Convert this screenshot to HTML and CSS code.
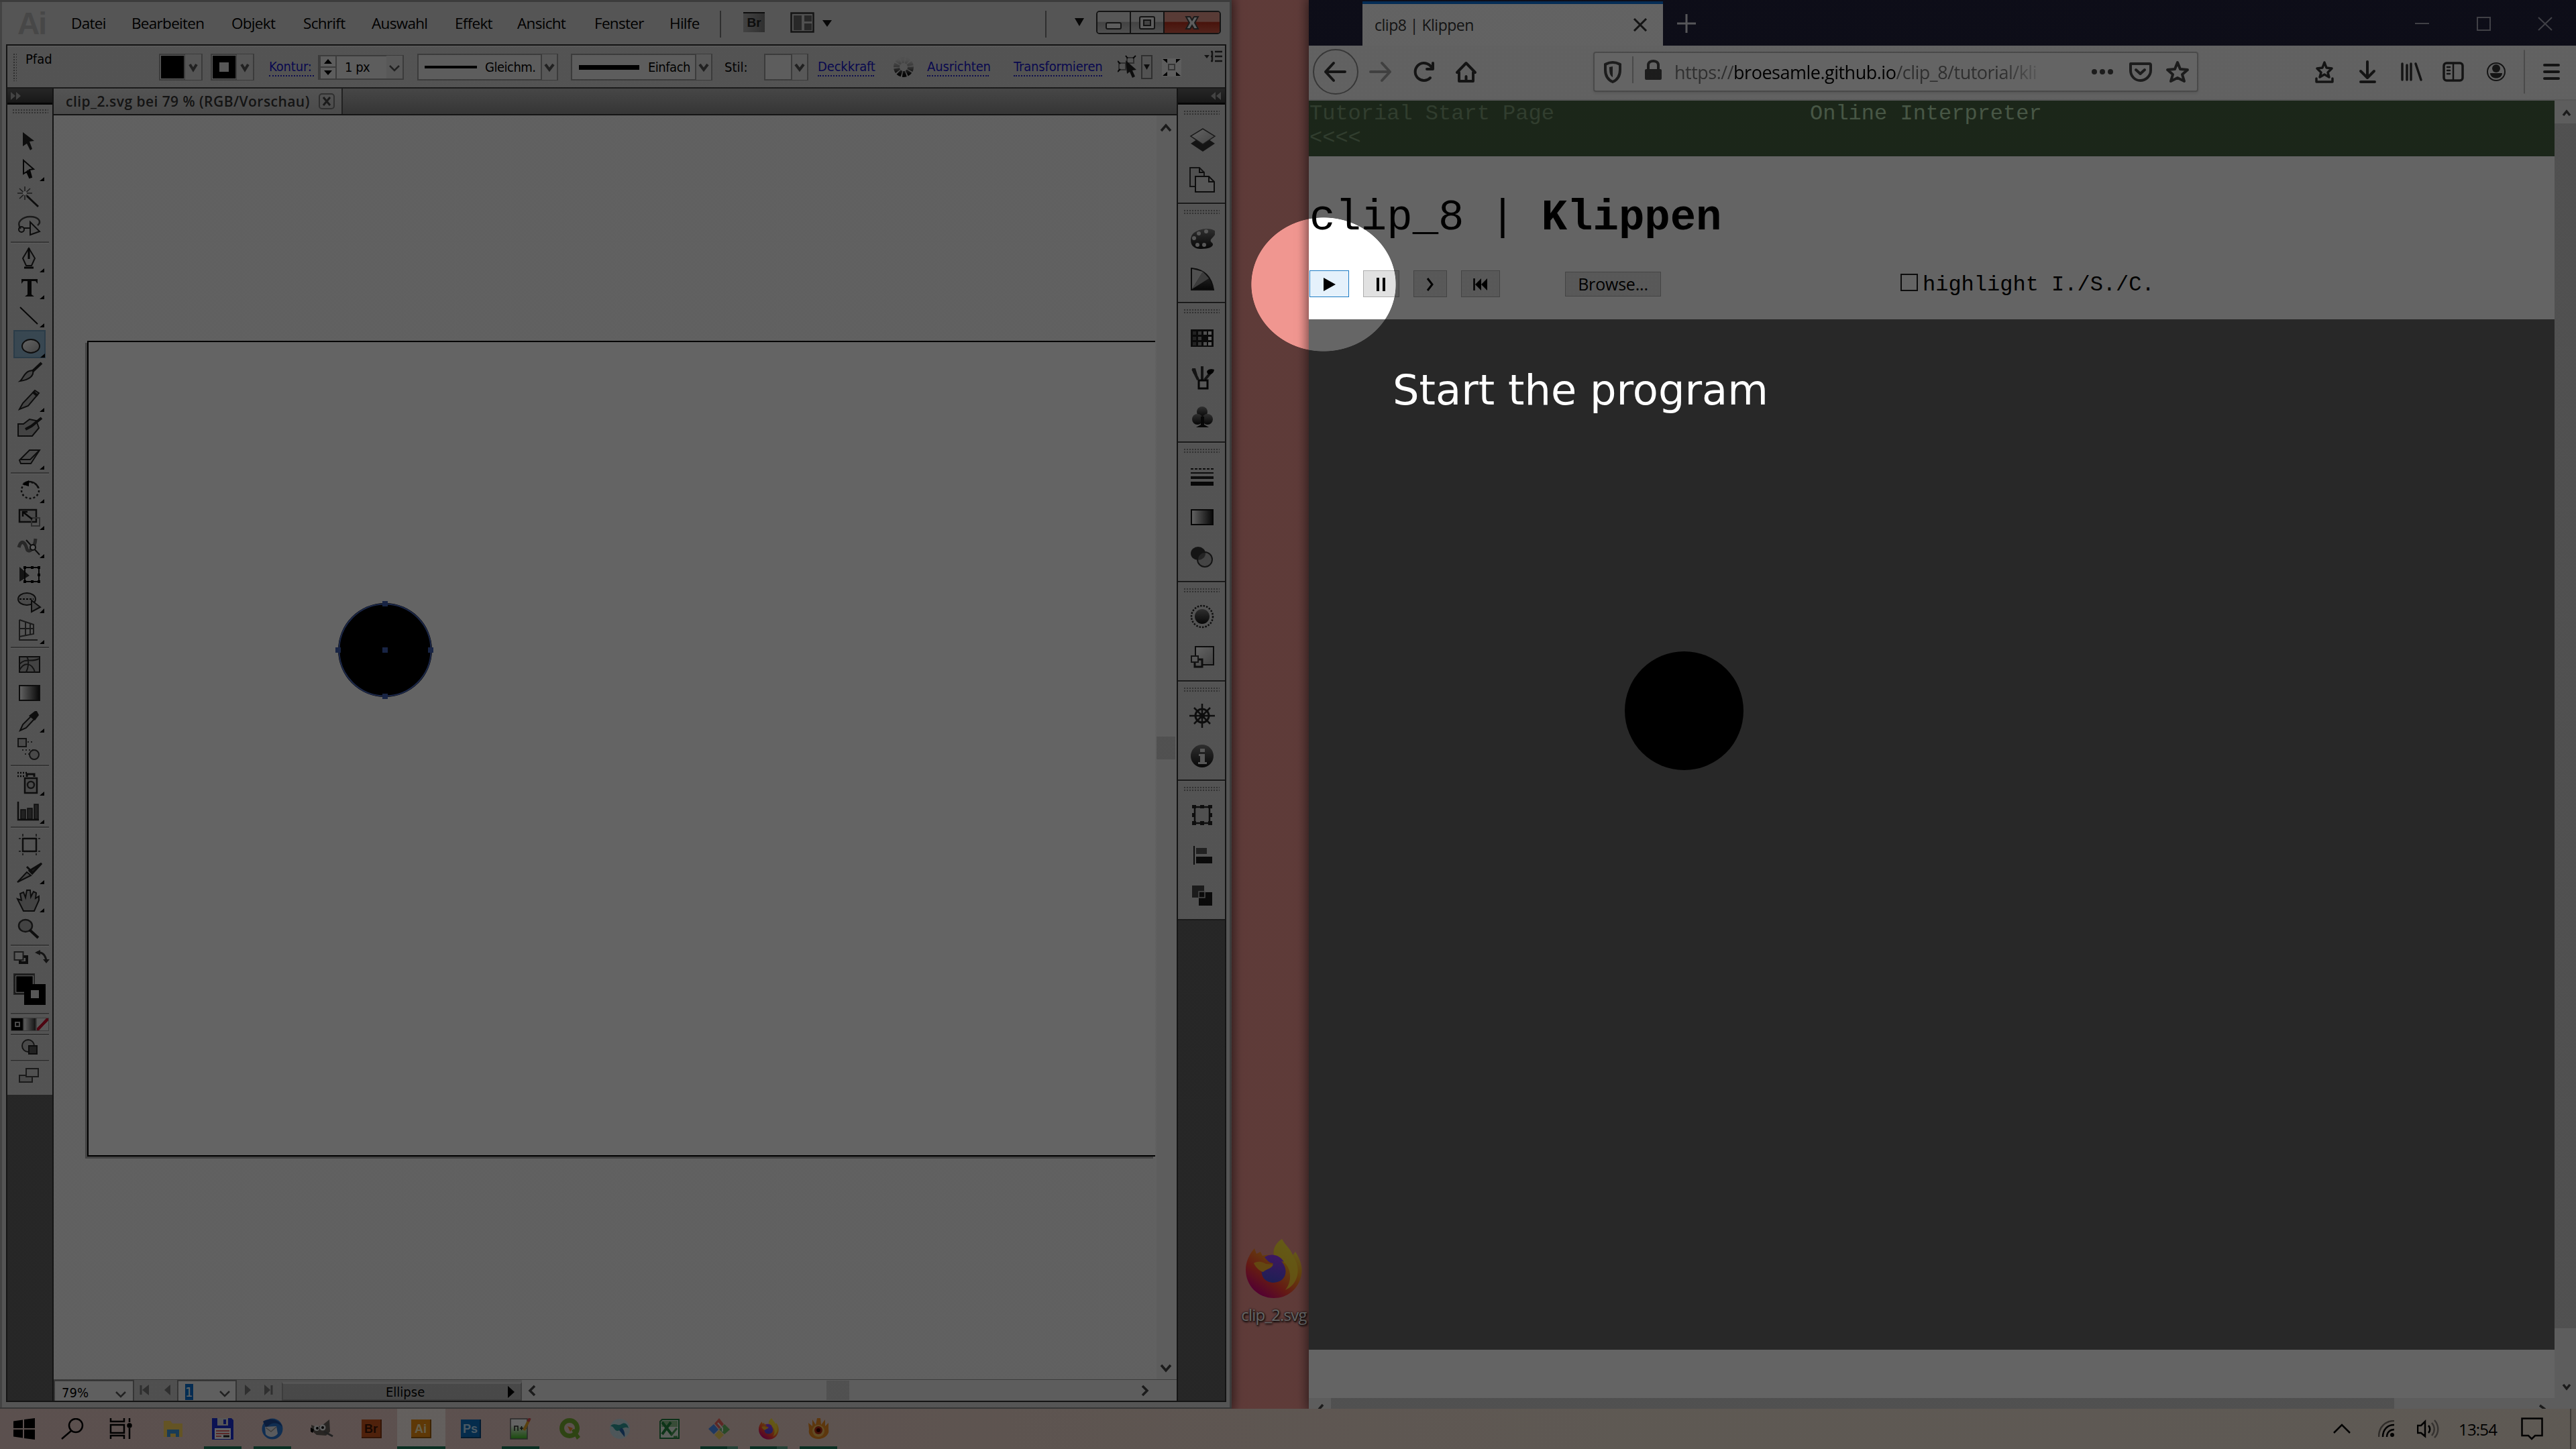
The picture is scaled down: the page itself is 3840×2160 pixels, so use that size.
FILE: index.html
```html
<!DOCTYPE html>
<html lang="de">
<head>
<meta charset="utf-8">
<title>clip8 | Klippen</title>
<link rel="stylesheet" href="styles.css">
</head>
<body>
<svg class="defs" width="0" height="0">
  <defs>
    <linearGradient id="gl" x1="0" y1="0" x2="1" y2="1"><stop offset="0" stop-color="#fff"/><stop offset="1" stop-color="#aaa"/></linearGradient>
    <linearGradient id="gh"><stop offset="0" stop-color="#fff"/><stop offset="1" stop-color="#111"/></linearGradient>
    <linearGradient id="gd" x1="0" y1="0" x2="0" y2="1"><stop offset="0" stop-color="#777"/><stop offset="1" stop-color="#111"/></linearGradient>
    <linearGradient id="gw" x1="0" y1="0" x2="0" y2="1"><stop offset="0" stop-color="#ccc"/><stop offset=".5" stop-color="#888"/><stop offset="1" stop-color="#111"/></linearGradient>
    <linearGradient id="ffa" x1=".85" y1=".1" x2=".25" y2=".95"><stop offset="0" stop-color="#fff04a"/><stop offset=".35" stop-color="#ffa51f"/><stop offset=".7" stop-color="#ff4133"/><stop offset="1" stop-color="#d3007e"/></linearGradient>
    <linearGradient id="ffb" x1=".6" y1="0" x2=".4" y2="1"><stop offset="0" stop-color="#a03cf5"/><stop offset="1" stop-color="#4a4fd8"/></linearGradient>
    <linearGradient id="npp" x1="0" y1="0" x2="0" y2="1"><stop offset=".3" stop-color="#fff"/><stop offset="1" stop-color="#3fc020"/></linearGradient>
    <symbol id="firefox" viewBox="0 0 84 88">
      <path d="M54 0C59 10 66 13 70 24L74 19C82 31 85 43 83 53C79 75 62 88 42 88C18 88 0 69 0 46C0 34 5 23 13 14L16 22L22 19L25 25C32 23 38 24 42 25C40 14 45 6 54 0Z" fill="url(#ffa)"/>
      <path d="M54 0C59 10 66 13 71 26C84 46 77 68 59 76C72 60 66 37 52 32L42 25C40 14 45 6 54 0Z" fill="#ffe436" opacity=".8"/>
      <path d="M28 27C38 20 51 24 57 34L53 33C65 46 60 64 42 65C28 65 22 55 24 44L38 41L41 36C35 36 31 31 28 27Z" fill="url(#ffb)"/>
      <path d="M12 36C18 32 26 34 30 37L41 38C38 45 31 44 26 49C23 49 15 43 12 36Z" fill="#ffb52b"/>
    </symbol>
  </defs>
</svg>

<main class="desktop">

  <div class="shortcut">
    <svg width="84" height="88"><use href="#firefox"/></svg>
    <span>clip_2.svg</span>
  </div>

  <section class="ai">
    <header class="ai-title">
      <span class="ai-logo">Ai</span>
      <nav class="ai-menu"><span>Datei</span><span>Bearbeiten</span><span>Objekt</span><span>Schrift</span><span>Auswahl</span><span>Effekt</span><span>Ansicht</span><span>Fenster</span><span>Hilfe</span></nav>
      <i class="vline"></i>
      <span class="br-chip">Br</span>
      <svg class="arrange" width="64" height="32"><rect x="1.5" y="1.500" width="33" height="28" fill="#ccc" stroke="#333" stroke-width="2.500"/><path d="M5 5H17V27H5zM21 5H32V14H21zM21 17H32V27H21z" fill="#666"/><path d="M48 12H62L55 22z" fill="#111"/></svg>
      <i class="vline push"></i>
      <svg class="wsdrop" width="14" height="12"><path d="M0 0H14L7 12z" fill="#111"/></svg>
      <div class="winbtns">
        <span class="min"><svg width="26" height="14"><rect x="2" y="3" width="22" height="9" rx="2" fill="#eee" stroke="#333" stroke-width="2"/></svg></span>
        <span class="max"><svg width="26" height="22"><rect x="2" y="2" width="22" height="18" rx="2" fill="#eee" stroke="#333" stroke-width="2"/><rect x="8" y="7" width="10" height="8" fill="#aaa" stroke="#333" stroke-width="2"/></svg></span>
        <span class="close"><svg width="26" height="22"><path d="M4 2H10L13 7L16 2H22L17 11L22 20H16L13 15L10 20H4L9 11z" fill="#eee" stroke="#444" stroke-width="2"/></svg></span>
      </div>
    </header>

    <div class="ai-frame">
      <div class="ctrl">
        <i class="grip-v"></i>
        <span class="kind">Pfad</span>
        <span class="swatch"><b class="fill"></b><svg width="24" height="38"><path d="M7 15L12 23L17 15" class="chev"/></svg></span>
        <span class="swatch sw2"><b class="ring"></b><svg width="24" height="38"><path d="M7 15L12 23L17 15" class="chev"/></svg></span>
        <a class="lnk l-kontur">Kontur:</a>
        <span class="field num">
          <svg width="26" height="34"><path d="M1 0V34M25 0V34M1 17H25" stroke="#999" stroke-width="2"/><path d="M7 12L13 5L19 12zM7 22L13 29L19 22z" fill="#000"/></svg>
          <em>1 px</em>
          <svg width="24" height="34"><path d="M5 15L12 22L19 15" class="chev thin"/></svg>
        </span>
        <span class="field line1"><i></i><em>Gleichm.</em><svg width="24" height="38"><path d="M1 0V38" stroke="#999" stroke-width="2"/><path d="M7 15L13 23L19 15" class="chev"/></svg></span>
        <span class="field line2"><i></i><em>Einfach</em><svg width="24" height="38"><path d="M1 0V38" stroke="#999" stroke-width="2"/><path d="M7 15L13 23L19 15" class="chev"/></svg></span>
        <span class="lbl">Stil:</span>
        <span class="field style"><svg width="24" height="38"><path d="M1 0V38" stroke="#999" stroke-width="2"/><path d="M7 15L13 23L19 15" class="chev"/></svg></span>
        <a class="lnk l-deck">Deckkraft</a>
        <svg class="wheel" width="32" height="32"><circle cx="16" cy="16" r="10.500" fill="none" stroke="url(#gw)" stroke-width="9" stroke-dasharray="5 1.500"/></svg>
        <a class="lnk l-aus">Ausrichten</a>
        <a class="lnk l-trans">Transformieren</a>
        <svg class="isol" width="96" height="36"><path d="M2 12H12V22H2zM14 4H24V12H14z" fill="none" stroke="#777" stroke-width="2"/><path d="M0 9L4 13M0 25L4 21M12 1L15 5M27 1L23 5" stroke="#111" stroke-width="2"/><path d="M12 8L28 22L22 23L26 32L22 34L18 25L14 28z" fill="#222"/><rect x="36" y="1" width="15" height="34" fill="#d0d0d0" stroke="#777" stroke-width="2"/><path d="M39 14H48L43.500 22z" fill="#222"/><rect x="66" y="5" width="29" height="27" fill="#eee"/><path d="M76 14H85V22H76z" fill="none" stroke="#888" stroke-width="2"/><path d="M67 6H74V12zM94 6H87V12zM67 31H74V25zM94 31H87V25z" fill="#000"/></svg>
        <svg class="pmenu" width="27" height="18"><path d="M0 7H8L4 12z" fill="#333"/><path d="M10 2H13M16 2H27M10 9H13M16 9H27M10 16H13M16 16H27M12 2V16" stroke="#333" stroke-width="2.500"/></svg>
      </div>

      <div class="ai-body">
        <aside class="tools">
          <div class="dockhead left"><svg width="16" height="12"><path d="M0 0L7 6L0 12zM8 0L15 6L8 12z" fill="#aaa"/></svg></div>
          <div class="toolpanel">
            <i class="grip-h"></i>
            <div class="tgroup">
              <svg class="tool"><path d="M14 7L31 20L24 21L28 32L25 34L20 24L14 28z" fill="#222"/></svg>
              <svg class="tool more"><path d="M15 7L30 20L24 21L27 32L24 33L20 24L15 27z" fill="#ccc" stroke="#111" stroke-width="2"/><path d="M20 22L24 21L27 32L24 33z" fill="#111"/><path d="M46 32V38H39z"/></svg>
              <svg class="tool"><path d="M6 14H28M17 4V24M9 7L25 22M25 7L9 22" stroke="#444" stroke-width="1.500"/><circle cx="17" cy="14" r="3" fill="#eee"/><path d="M20 18L37 34" stroke="#222" stroke-width="3"/></svg>
              <svg class="tool"><path d="M11 25C3 15 14 7 25 7C37 7 43 14 36 20" fill="none" stroke="#444" stroke-width="2.500"/><circle cx="12" cy="26" r="4" fill="none" stroke="#222" stroke-width="2"/><path d="M16 24H26M25 15L39 29L25 34z" fill="#ccc" stroke="#222" stroke-width="2"/></svg>
            </div>
            <hr>
            <div class="tgroup">
              <svg class="tool"><path d="M23 4L32 19L27 30H19L14 19z" fill="#ccc" stroke="#222" stroke-width="2"/><path d="M23 4V20M16 33H30" stroke="#111" stroke-width="3"/><path d="M46 34V40H39z"/></svg>
              <svg class="tool"><path d="M12 8H36V15L33 11H27V31L31 34H17L21 31V11H15L12 15z" fill="#111"/><path d="M46 32V38H39z"/></svg>
              <svg class="tool"><path d="M10 8L36 33" stroke="#111" stroke-width="2"/><path d="M46 32V38H39z"/></svg>
              <svg class="tool active"><ellipse cx="26" cy="24" rx="13" ry="10" fill="url(#gl)" stroke="#222" stroke-width="2"/><path d="M47 35V41H40z"/></svg>
              <svg class="tool"><path d="M42 7L28 20" stroke="#222" stroke-width="4"/><path d="M29 18C31 26 24 32 10 34C15 30 16 21 24 19z" fill="#aaa" stroke="#222" stroke-width="2"/></svg>
              <svg class="tool"><path d="M9 34L14 25L32 6L38 10L22 29z" fill="#aaa" stroke="#222" stroke-width="2"/><path d="M29 8L36 14" stroke="#222" stroke-width="4"/><path d="M46 32V38H39z"/></svg>
              <svg class="tool"><path d="M7 14H15L24 7L34 9L38 20L28 32H7z" fill="#aaa" stroke="#222" stroke-width="2"/><path d="M42 5L27 17L18 22" stroke="#222" stroke-width="4" fill="none"/></svg>
              <svg class="tool"><path d="M9 26L24 11H39L26 31H11z" fill="#bbb" stroke="#222" stroke-width="2"/><path d="M10 25H25L38 12" fill="none" stroke="#222" stroke-width="2"/><path d="M46 34V40H39z"/></svg>
            </div>
            <hr>
            <div class="tgroup">
              <svg class="tool"><ellipse cx="25" cy="21" rx="13" ry="12" fill="none" stroke="#222" stroke-width="2.500" stroke-dasharray="3 3"/><path d="M15 11C22 6 33 7 37 17" fill="none" stroke="#222" stroke-width="2.500"/><path d="M13 12L23 6V15z"/><path d="M46 34V40H39z"/></svg>
              <svg class="tool"><path d="M9 8H34V26H9z" fill="#bbb" stroke="#222" stroke-width="2.500"/><path d="M27 20H39V32H27z" fill="none" stroke="#777" stroke-width="2"/><path d="M14 18V11H21M14 11L28 22" fill="none" stroke="#111" stroke-width="2.500"/><path d="M46 32V38H39z"/></svg>
              <svg class="tool"><path d="M8 22C12 8 18 16 20 24S32 24 33 9" fill="none" stroke="#666" stroke-width="5"/><path d="M19 11L39 33" stroke="#222" stroke-width="2"/><circle cx="29" cy="22" r="4" fill="#eee" stroke="#222" stroke-width="2"/><path d="M46 32V38H39z"/></svg>
              <svg class="tool"><path d="M9 9L24 22L9 31z" fill="#333"/><path d="M17 10H38V31H17z" fill="none" stroke="#111" stroke-width="2"/><path d="M15 8h4v4h-4zM26 8h4v4h-4zM36 8h4v4h-4zM36 19h4v4h-4zM36 29h4v4h-4zM26 29h4v4h-4zM15 29h4v4h-4z"/></svg>
              <svg class="tool"><ellipse cx="20" cy="15" rx="13" ry="9" fill="#bbb" stroke="#222" stroke-width="2"/><path d="M9 15H30" stroke="#111" stroke-width="2" stroke-dasharray="3 2"/><path d="M27 17L40 27L27 34z" fill="#aaa" stroke="#222" stroke-width="2"/><path d="M46 29V36H39z"/></svg>
              <svg class="tool"><path d="M9 4V34H36M9 4L30 11V25L9 29M9 17H30M18 7V27M25 9V26" fill="none" stroke="#444" stroke-width="2"/><path d="M46 34V40H39z"/></svg>
            </div>
            <hr>
            <div class="tgroup">
              <svg class="tool"><path d="M9 9H39V32H9z" fill="#aaa" stroke="#222" stroke-width="2"/><path d="M9 20C18 10 26 18 38 12M9 29C16 16 28 18 32 32M20 9C24 15 22 26 19 32" fill="none" stroke="#333" stroke-width="2"/></svg>
              <svg class="tool"><path d="M9 10H39V32H9z" fill="url(#gh)" stroke="#222" stroke-width="2"/></svg>
              <svg class="tool"><path d="M10 35L14 26L26 14L31 18L19 31z" fill="#bbb" stroke="#222" stroke-width="2"/><path d="M23 13L32 20L38 12L35 6H32z" fill="#222"/><path d="M46 32V38H39z"/></svg>
              <svg class="tool"><rect x="7" y="5" width="12" height="12" fill="#bbb" stroke="#333" stroke-width="2"/><path d="M21 10H31M13 22H32M17 28H26" stroke="#444" stroke-width="2" stroke-dasharray="2 3"/><circle cx="31" cy="29" r="7" fill="#bbb" stroke="#333" stroke-width="2"/></svg>
            </div>
            <hr>
            <div class="tgroup">
              <svg class="tool"><path d="M6 6H20M6 11H16" stroke="#111" stroke-width="2.500" stroke-dasharray="2 2"/><path d="M17 14H35V36H17z" fill="#bbb" stroke="#222" stroke-width="2.500"/><path d="M20 12V8H31V12" fill="none" stroke="#222" stroke-width="3"/><circle cx="26" cy="24" r="5" fill="none" stroke="#333" stroke-width="2.500"/><path d="M46 34V40H39z"/></svg>
              <svg class="tool"><path d="M7 7V34H38" fill="none" stroke="#222" stroke-width="2.500"/><path d="M11 19H18V33H11zM21 17H28V33H21zM31 11H37V33H31z" fill="#555" stroke="#222" stroke-width="1.500"/><path d="M46 34V40H39z"/></svg>
            </div>
            <hr>
            <div class="tgroup">
              <svg class="tool"><path d="M14 12H34V31H14z" fill="none" stroke="#222" stroke-width="2.500"/><path d="M8 12H11M37 12H40M8 31H11M37 31H40M14 5V9M34 5V9M14 34V37M34 34V37" stroke="#555" stroke-width="2"/></svg>
              <svg class="tool"><path d="M6 35L20 20L26 25z" fill="#aaa" stroke="#222" stroke-width="2"/><path d="M20 12L30 22M24 18L42 7L28 22z" fill="#555" stroke="#222" stroke-width="3"/><path d="M46 32V38H39z"/></svg>
              <svg class="tool"><path d="M6 18L12 20L10 10L15 8L18 16L20 5H25L26 15L30 7L34 9L33 17L38 14V20L31 36H15z" fill="#aaa" stroke="#222" stroke-width="2"/><path d="M46 32V38H39z"/></svg>
              <svg class="tool"><ellipse cx="18" cy="16" rx="10" ry="9" fill="#aaa" stroke="#333" stroke-width="2.500"/><path d="M24 22L37 34" stroke="#222" stroke-width="4"/></svg>
            </div>
            <hr>
            <svg class="swap" width="54" height="96"><rect x="10" y="12" width="10" height="9" fill="none" stroke="#222" stroke-width="4"/><rect x="1.500" y="5" width="13" height="12" fill="#ddd" stroke="#444" stroke-width="2"/><path d="M35 6C43 5 48 9 49 19" fill="none" stroke="#333" stroke-width="3"/><path d="M32 6L40 2V10zM44 16H54L49 22z" fill="#333"/><rect x="1" y="38" width="30" height="30" fill="#000" stroke="#555" stroke-width="2"/><rect x="3.500" y="40.500" width="26" height="25" fill="none" stroke="#ddd" stroke-width="1.500"/><path d="M16 53H48V84H16z" fill="#000"/><path d="M26 62H38V74H26z" fill="#ddd"/></svg>
            <hr class="close-hr">
            <div class="modes"><i class="m1"></i><i class="m2"></i><i class="m3"></i></div>
            <hr class="close-hr">
            <svg class="tool short"><circle cx="22" cy="13" r="9" fill="#bbb" stroke="#333" stroke-width="2"/><path d="M23 13H35V25H23z" fill="#555" stroke="#222" stroke-width="2"/></svg>
            <hr class="close-hr">
            <svg class="tool"><path d="M9 16H28V26H9z" fill="#bbb" stroke="#444" stroke-width="2"/><path d="M19 6H37V18H19z" fill="#ccc" stroke="#444" stroke-width="2"/></svg>
          </div>
        </aside>

        <div class="doc">
          <div class="tabs"><div class="tab"><span>clip_2.svg bei 79 % (RGB/Vorschau)</span><svg width="24" height="24"><rect x="1" y="1" width="22" height="22" rx="4" fill="none" stroke="#777" stroke-width="2"/><path d="M7 6L17 18M17 6L7 18" stroke="#444" stroke-width="3"/></svg></div></div>
          <div class="viewport">
            <div class="canvas">
              <div class="artboard">
                <svg width="148" height="148"><circle cx="74" cy="74" r="70" fill="#000"/><circle cx="74" cy="74" r="68.500" fill="none" stroke="#4463b8" stroke-width="2"/><path d="M70 1H78V9H70zM70 70H78V78H70zM70 139H78V147H70zM0 70H8V78H0zM138 70H146V78H138z" fill="#3d5cae"/></svg>
              </div>
            </div>
            <div class="vscroll">
              <svg width="18" height="14"><path d="M2 12L9 4L16 12" class="chev big"/></svg>
              <i></i>
              <svg width="18" height="14"><path d="M2 2L9 10L16 2" class="chev big"/></svg>
            </div>
          </div>
          <div class="status">
            <span class="sfield zoomf">79%<svg width="20" height="14"><path d="M3 3L10 10L17 3" class="chev thin"/></svg></span>
            <svg class="pager" width="64" height="32"><path d="M10 8V22" stroke="#777" stroke-width="3"/><path d="M22 7V23L12 15zM54 7V23L45 15z" fill="#777"/></svg>
            <span class="sfield pagef"><mark>1</mark><svg width="20" height="14"><path d="M3 3L10 10L17 3" class="chev thin"/></svg></span>
            <svg class="pager" width="67" height="32"><path d="M12 7V23L21 15zM41 7V23L50 15z" fill="#777"/><path d="M52 8V22" stroke="#777" stroke-width="3"/></svg>
            <span class="sinfo">Ellipse<svg width="10" height="18"><path d="M0 0L10 9L0 18z"/></svg></span>
            <div class="hscroll">
              <svg width="14" height="18"><path d="M11 2L4 9L11 16" class="chev big"/></svg>
              <i></i>
              <svg width="14" height="18"><path d="M3 2L10 9L3 16" class="chev big"/></svg>
            </div>
          </div>
        </div>

        <aside class="dock">
          <div class="dockhead right"><svg width="16" height="12"><path d="M7 0L0 6L7 12zM15 0L8 6L15 12z" fill="#aaa"/></svg></div>
          <div class="dgroup"><i class="grip-h"></i>
            <svg class="ico"><path d="M2 29L20 17L38 29L20 41z" fill="#333"/><path d="M2 18L20 7L38 18L20 30z" fill="url(#gl)" stroke="#444" stroke-width="1.500"/></svg>
            <svg class="ico"><path d="M1 5H15L22 12V33H1z" fill="#ccc" stroke="#333" stroke-width="2"/><path d="M9 18H29L37 26V41H9z" fill="#ddd" stroke="#222" stroke-width="2"/><path d="M15 5V12H22M29 18V26H37" fill="none" stroke="#222" stroke-width="2"/></svg>
          </div>
          <div class="dgroup"><i class="grip-h"></i>
            <svg class="ico"><path d="M38 11C30 5 8 8 3 19C-1 33 8 39 18 38C30 38 38 34 34 29C28 25 35 22 38 17z" fill="url(#gd)"/><g fill="#ddd"><circle cx="14" cy="15" r="3"/><circle cx="25" cy="12" r="3"/><circle cx="7" cy="22" r="3"/><circle cx="12" cy="32" r="3"/><circle cx="22" cy="32" r="3"/></g></svg>
            <svg class="ico"><path d="M3 7C22 8 33 20 36 39H3z" fill="url(#gd)" stroke="#222" stroke-width="2"/><path d="M4 8V38L20 12z" fill="#ccc"/><path d="M4 38L20 12L29 22z" fill="#999"/></svg>
          </div>
          <div class="dgroup tall"><i class="grip-h"></i>
            <svg class="ico"><path d="M2 10H36V36H2z" fill="#1a1a1a"/><path d="M5 13H10V18H5zM5 21H10V26H5zM5 29H10V34H5z" fill="#555"/><path d="M13 13H18V18H13zM13 21H18V26H13zM13 29H18V34H13z" fill="#888"/><path d="M21 13H26V18H21zM21 29H26V34H21z" fill="#ccc"/><path d="M28 13H33V18H28zM28 21H33V26H28zM28 29H33V34H28z" fill="#eee"/></svg>
            <svg class="ico"><path d="M13 25L5 9M19 5V26M23 25L33 13" stroke="#333" stroke-width="4"/><path d="M26 13C28 8 34 9 37 10C36 17 30 18 27 16z"/><path d="M14 26H27V38H14z" fill="#ddd" stroke="#111" stroke-width="3"/><path d="M4 8L9 8L12 18L6 16z" fill="#333"/></svg>
            <svg class="ico"><g fill="url(#gd)"><circle cx="19" cy="13" r="8"/><circle cx="12" cy="24" r="8"/><circle cx="27" cy="24" r="8"/></g><path d="M17 20H22V32L29 36H10L17 32z" fill="#111"/></svg>
          </div>
          <div class="dgroup tall"><i class="grip-h"></i>
            <svg class="ico"><path d="M2 10H36" stroke="#222" stroke-width="2" stroke-dasharray="4 2"/><path d="M2 16H36" stroke="#222" stroke-width="2"/><path d="M2 23H36" stroke="#222" stroke-width="4"/><path d="M2 32H36" stroke="#111" stroke-width="6"/></svg>
            <svg class="ico"><path d="M3 11H35V33H3z" fill="url(#gh)" stroke="#111" stroke-width="2"/></svg>
            <svg class="ico"><ellipse cx="13" cy="16" rx="11" ry="10" fill="#333"/><ellipse cx="23" cy="25" rx="11" ry="11" fill="#888" fill-opacity=".5" stroke="#333" stroke-width="2"/></svg>
          </div>
          <div class="dgroup"><i class="grip-h"></i>
            <svg class="ico"><circle cx="19" cy="22" r="16" fill="none" stroke="#222" stroke-width="2.500" stroke-dasharray="2.500 2"/><circle cx="19" cy="22" r="11" fill="url(#gd)"/></svg>
            <svg class="ico"><path d="M9 7H36V34H9z" fill="url(#gl)" stroke="#222" stroke-width="2"/><path d="M8 26H19V37H8z" fill="#ccc" stroke="#222" stroke-width="3"/><path d="M3 21H13V30H3z" fill="#ddd" stroke="#333" stroke-width="2"/></svg>
          </div>
          <div class="dgroup"><i class="grip-h"></i>
            <svg class="ico"><circle cx="19" cy="22" r="10" fill="none" stroke="#222" stroke-width="3"/><path d="M0 22H38M19 4V40M7 10L31 34M31 10L7 34" stroke="#222" stroke-width="2.500"/><circle cx="19" cy="22" r="4" fill="#222"/></svg>
            <svg class="ico"><circle cx="19" cy="22" r="17" fill="url(#gd)"/><path d="M16 11H23V16H16zM14 19H23V31H26V34H13V31H16V22H14z" fill="#ddd"/></svg>
          </div>
          <div class="dgroup tall"><i class="grip-h"></i>
            <svg class="ico"><path d="M8 10H30V34H8z" fill="#ccc" stroke="#222" stroke-width="2.500"/><path d="M4 7H10V12H4zM16 7H22V12H16zM28 7H34V12H28zM4 19H9V25H4zM29 19H34V25H29zM4 31H10V37H4zM16 31H22V37H16zM28 31H34V37H28z" fill="#222"/></svg>
            <svg class="ico"><path d="M7 8V36" stroke="#222" stroke-width="2"/><path d="M10 11H26V20H10z" fill="#555"/><path d="M10 24H34V34H10z" fill="#1a1a1a"/></svg>
            <svg class="ico"><path d="M4 7H22V25H4z" fill="#444"/><path d="M14 17H34V37H14z" fill="#1a1a1a"/><path d="M14 16H23V25H14z" fill="none" stroke="#bbb" stroke-width="1.500"/></svg>
          </div>
        </aside>
      </div>
    </div>
  </section>

  <section class="ff">
    <header class="ff-title">
      <div class="ff-tab"><span>clip8 | Klippen</span><svg width="22" height="20"><path d="M2 1L20 19M20 1L2 19" stroke="#333" stroke-width="3"/></svg></div>
      <svg class="plus" width="28" height="28"><path d="M0 14H28M14 0V28" stroke="#dcdce4" stroke-width="3"/></svg>
      <svg class="ff-win" width="206" height="22"><path d="M0 11H21M93 2H112V21H93zM184 2L204 21M204 2L184 21" fill="none" stroke="#a4a4b2" stroke-width="2"/></svg>
    </header>
    <div class="ff-nav">
      <svg class="nav-ic" width="252" height="68" fill="none" stroke="#333" stroke-width="4" stroke-linecap="round" stroke-linejoin="round"><circle cx="34" cy="34" r="33" stroke="#8c8c8c" stroke-width="2"/><path d="M48 34H19M31 21L19 34L31 47"/><path d="M86 34H115M103 21L115 34L103 47" stroke="#a2a2a2"/><path d="M175 43A13 13 0 1 1 174 24L178 28M179 21V30H170"/><path d="M215 35L228.500 21L242 35M218 35V48H239V35M228.500 48V41"/></svg>
      <div class="url">
        <svg width="110" height="56" fill="none"><path d="M27 18C21 18 18 20 16 21V29C16 39 20 44 27 47C34 44 38 39 38 29V21C36 20 33 18 27 18Z" stroke="#484848" stroke-width="4"/><path d="M27 24V40C23 38 22 34 22 25z" fill="#484848"/><path d="M57 9V49" stroke="#bbb" stroke-width="2"/><path d="M76 28H98Q100 28 100 30V42Q100 44 98 44H77Q75 44 75 42V30Q75 28 77 28z" fill="#484848"/><path d="M80 29V22C80 14 95 14 95 22V29" stroke="#484848" stroke-width="4"/></svg>
        <span class="addr"><span>https://</span><b>broesamle.github.io</b><span>/clip_8/tutorial/kli</span></span>
        <svg class="url-ic" width="146" height="40" fill="none" stroke="#484848" stroke-width="4" stroke-linejoin="round"><g fill="#484848" stroke="none"><circle cx="4" cy="20" r="4"/><circle cx="16" cy="20" r="4"/><circle cx="28" cy="20" r="4"/></g><path d="M58 8H86Q88 8 88 10V18C88 26 81 33 72.500 33C64 33 58 26 58 18z"/><path d="M66 17L72.500 23L79 17" stroke-linecap="round"/><path d="M128 6L132 16L143 17L135 24L138 34L128 29L118 34L121 24L113 17L124 16z"/></svg>
      </div>
      <svg class="bar-ic" width="366" height="68" fill="none" stroke="#333" stroke-width="3.500" stroke-linecap="round" stroke-linejoin="round"><path d="M14 20L17 28L25 29L19 35L21 42L14 38L7 42L9 35L3 29L11 28zM2 44V49H26V44"/><path d="M78 19V42M68 33L78 43L88 33M68 49H89" stroke-width="4"/><path d="M130 22V46M137 24V46M143 22V46M150 22L158 46"/><rect x="192" y="21" width="28" height="26" rx="4"/><path d="M206 21V47M197 27H201M197 32H201M197 37H201" stroke-width="2.500"/><circle cx="270" cy="34" r="13" stroke-width="2"/><circle cx="270" cy="29" r="6" fill="#333" stroke="none"/><path d="M261 36H279C279 46 261 46 261 36z" fill="#333" stroke="none"/><path d="M312 2V66" stroke="#aaa" stroke-width="1.500"/><path d="M342 24H363M342 34H363M342 44H363" stroke-width="4"/></svg>
    </div>
    <div class="ff-view">
      <div class="page">
        <nav class="crumbs"><a>Tutorial Start Page<br>&lt;&lt;&lt;&lt;</a><a class="on">Online Interpreter</a></nav>
        <div class="controls">
          <h1>clip_8 | <b>Klippen</b></h1>
          <div class="btnrow">
            <button class="play"><svg width="18" height="20"><path d="M0 0L18 10L0 20z"/></svg></button>
            <button class="pause"><svg width="14" height="20"><path d="M0 0H4V20H0zM9 0H13V20H9z"/></svg></button>
            <button class="step"><svg width="12" height="20"><path d="M2 1L9 10L2 19" fill="none" stroke="#000" stroke-width="3"/></svg></button>
            <button class="rew"><svg width="22" height="18"><path d="M1.500 0V18" stroke="#000" stroke-width="2.500"/><path d="M12 0V18L3 9zM21 0V18L12 9z"/></svg></button>
            <button class="browse">Browse...</button>
            <label><i></i><span>highlight I./S./C.</span></label>
          </div>
        </div>
        <div class="stage"><i></i></div>
      </div>
      <div class="ff-vs"><svg width="14" height="12"><path d="M2 10L7 4L12 10" class="chev big"/></svg><i></i><svg width="14" height="12"><path d="M2 2L7 8L12 2" class="chev big"/></svg></div>
      <div class="ff-hs"><svg width="33" height="16"><path d="M21 10L15 17" class="chev big"/></svg><i></i><svg width="20" height="16"><path d="M2 11L10 17" class="chev big"/></svg></div>
    </div>
  </section>

  <footer class="taskbar">
    <div class="sys"><svg width="32" height="32"><path d="M0 4.500L14 2.500V15H0zM16 2L32 0V15H16zM0 17H14V29.500L0 27.500zM16 17H32V32L16 30z"/></svg></div>
    <div class="sys"><svg width="34" height="32" fill="none" stroke="#000" stroke-width="2.500"><circle cx="22" cy="11" r="10"/><path d="M15 19L1 31"/></svg></div>
    <div class="sys"><svg width="34" height="32" fill="none" stroke="#000" stroke-width="2.500"><path d="M2 0V5H22V0M2 10H22V22H2zM2 31V26H22V31M30 0V6M30 15V31"/><circle cx="30" cy="11" r="2.500" fill="#000"/></svg></div>
    <div class="apps">
      <div class="app"><svg width="28" height="26"><path d="M0 1H10L13 5H28V25H0z" fill="#ffd55c"/><path d="M5 14H23V25H18V20H10V25H5z" fill="#3f96dc"/></svg></div>
      <div class="app run"><svg width="32" height="32"><path d="M0 0H29L32 3V32H0z" fill="#1b2fd4"/><path d="M8 0H24V11H8z" fill="#ddd"/><path d="M17 2H21V9H17z" fill="#1b2fd4"/><path d="M4 15H28V31H4z" fill="#fff"/><path d="M6 19H26M6 23H26M6 27H14" stroke="#d33" stroke-width="1.500"/><path d="M17 27H26" stroke="#222" stroke-width="3"/></svg></div>
      <div class="app run"><svg width="34" height="32"><circle cx="17" cy="16" r="15.500" fill="#2875cf"/><path d="M3 5C12 -1 27 1 32 13C24 5 14 6 8 15z" fill="#1c4a98"/><path d="M6 13L23 12L25 23C21 29 12 30 7 24z" fill="#e4e8ee"/><path d="M7 14L15 20L23 13" fill="none" stroke="#999" stroke-width="1.500"/></svg></div>
      <div class="app"><svg width="34" height="30"><path d="M1 9L8 12L17 10L28 1L29 19L23 25L9 24L2 18z" fill="#655f58"/><circle cx="9" cy="14" r="4" fill="#eee"/><circle cx="18" cy="13" r="4.500" fill="#eee"/><circle cx="10" cy="14" r="2"/><circle cx="18" cy="13" r="2"/><path d="M0 13L5 16L3 21L0 19z"/><path d="M20 19L33 26" stroke="#555" stroke-width="3"/></svg></div>
      <div class="app"><span class="cs br">Br</span></div>
      <div class="app run full"><span class="cs il">Ai</span></div>
      <div class="app"><span class="cs ps">Ps</span></div>
      <div class="app run"><svg width="32" height="32"><path d="M1 1H26V31H1z" fill="url(#npp)" stroke="#666" stroke-width="1.500"/><path d="M7 19V12H12V19M15 15H20M17.500 12V18M21 15H25" fill="none" stroke="#222" stroke-width="1.500"/><path d="M29 2L21 18" stroke="#e8a526" stroke-width="4"/><path d="M30 0L27 5" stroke="#d54d55" stroke-width="4"/></svg></div>
      <div class="app"><svg width="32" height="32"><circle cx="15" cy="15" r="11.500" fill="none" stroke="#76ad30" stroke-width="7"/><path d="M18 18L22 16L31 28L26 32z" fill="#76ad30"/><path d="M12 12L20 15L16 20z" fill="#f08a24"/></svg></div>
      <div class="app"><svg width="30" height="32"><circle cx="15" cy="16" r="15" fill="#c5dce4"/><path d="M1 12C7 5 12 13 17 9C22 5 27 9 28 15C22 11 17 18 12 19C6 19 7 12 1 12z" fill="#2e9b98"/><path d="M14 18L22 28C23 22 21 16 17 14z" fill="#2766ab"/></svg></div>
      <div class="app"><svg width="30" height="30"><path d="M4 1H29V29H1V4z" fill="#e9f2e7" stroke="#1e7b3e" stroke-width="2"/><path d="M3 3H27V12H3z" fill="#8fc28c"/><path d="M4 5L18 23M17 5L4 23" stroke="#20843c" stroke-width="4"/><path d="M17 25L26 14M21 27H27" stroke="#499d57" stroke-width="3"/></svg></div>
      <div class="app run multi"><svg width="32" height="32"><path d="M16 0L23 9L16 16L9 8z" fill="#ee665f"/><path d="M8 9L15 17L8 24L0 16z" fill="#4d8ef2"/><path d="M24 9L32 17L24 24L16 17z" fill="#65ba62"/><path d="M16 18L23 25L16 32L9 25z" fill="#f0d15a"/><path d="M14 7L21 15V20" fill="none" stroke="#eee" stroke-width="2"/></svg></div>
      <div class="app run multi"><svg width="30" height="32"><use href="#firefox"/></svg></div>
      <div class="app run"><svg width="34" height="32"><path d="M2 7L8 12L8 2L13 10L15 0H20L21 10L27 2V12L32 7V17C34 24 26 31 17 31S1 25 3 17z" fill="#ee8c20"/><ellipse cx="17" cy="19" rx="9" ry="9" fill="#f6c05d"/><circle cx="17" cy="18" r="6" fill="#b42a16"/><circle cx="17" cy="18" r="3" fill="#300"/></svg></div>
    </div>
    <div class="tray">
      <svg width="26" height="16"><path d="M1 14L13 2L25 14" fill="none" stroke="#000" stroke-width="2.500"/></svg>
      <svg class="wifi" width="25" height="26" fill="none" stroke="#000" stroke-width="2.500"><circle cx="21" cy="22" r="3" fill="#000" stroke="none"/><path d="M13 25C13 18 18 14 24 14M7 25C7 14 14 7 24 7"/><path d="M1 25C1 10 11 1 24 1" stroke="#776f68"/></svg>
      <svg class="vol" width="34" height="28" fill="none" stroke="#000" stroke-width="2.500"><path d="M1 9H6L12 3V25L6 20H1zM17 9C20 12 20 17 17 20"/><path d="M22 5C27 11 27 18 22 24M26 1C33 9 33 20 26 27" stroke="#88807a"/></svg>
      <time>13:54</time>
      <svg class="note" width="34" height="34"><path d="M1.500 1.500H31.500V27H21L16 32L11 27H1.500z" fill="none" stroke="#000" stroke-width="2.500"/></svg>
      <i></i>
    </div>
  </footer>

  <div class="dim"></div>
  <p class="hint">Start the program</p>
</main>
</body>
</html>
```
FILE: styles.css
```css
* { box-sizing: border-box; }
body { margin: 0; background: #000; }
svg { display: block; flex: none; }
i, em, b { font-style: normal; }
.defs { position: absolute; }

.desktop {
  position: relative; width: 3840px; height: 2160px; overflow: hidden;
  background: linear-gradient(90deg, #d8807c 1836px, #f09690 1850px, #f09690 1935px, #d48480 1951px);
  font-family: "DejaVu Sans Condensed", "DejaVu Sans", sans-serif; font-stretch: condensed;
  font-size: 20px; color: #000;
}
.dim {
  position: absolute; inset: 0;
  background: radial-gradient(ellipse 108px 100px at 1973px 424px, transparent 99.300%, rgba(0, 0, 0, .608) 100%);
}
.hint {
  position: absolute; left: 2076px; top: 545px; margin: 0; white-space: nowrap;
  font: 62.300px/74px "DejaVu Sans", sans-serif; font-stretch: normal; color: #fff;
}
.shortcut {
  position: absolute; left: 1844px; top: 1847px; width: 110px;
  display: flex; flex-direction: column; align-items: center; gap: 7px;
  font: 24px/36px "Open Sans", sans-serif; letter-spacing: -.8px; color: #fff;
  text-shadow: 1px 2px 3px #000, 0 0 3px #000;
}

.chev { fill: none; stroke: #555; stroke-width: 4; }
.chev.thin { stroke-width: 2.500; }
.chev.big { stroke: #444; stroke-width: 3.500; }

/* Illustrator window */
.ai {
  position: absolute; left: 0; top: 0; width: 1836px; height: 2100px;
  display: flex; flex-direction: column; padding: 0 8px 8px 9px;
  background: #d8d8d8; border-top: 3px solid #999; border-bottom: 2px solid #8a8a8a;
  box-shadow: inset 3px 0 #aaa, inset -3px 0 #999, 0 0 16px rgba(0, 0, 0, .5);
}
.ai-title { height: 63px; display: flex; align-items: flex-start; padding-top: 13px; }
.ai-logo {
  width: 97px; padding-left: 17px; font: bold 46px/38px "Liberation Sans", sans-serif;
  letter-spacing: -2px; color: #b4b4b4;
}
.ai-menu {
  display: grid; grid-template-columns: 90px 149px 107px 102px 124px 93px 115px 112px 75px;
  font: 22.500px/37px "Open Sans", sans-serif; letter-spacing: -.700px;
}
.vline { width: 2px; height: 40px; background: #777; }
.vline.push { margin-left: auto; }
.br-chip {
  margin: 2px 38px 0 33px; width: 32px; height: 30px; background: linear-gradient(90deg, #aaa, #777);
  border-top: 2px solid #222; font: bold 19px/28px "Liberation Sans", sans-serif; text-align: center; color: #222;
}
.arrange { margin-top: 2px; }
.wsdrop { margin: 11px 18px 0 42px; }
.winbtns {
  display: flex; width: 186px; height: 35px; margin-right: 8px;
  border: 2px solid #333; border-radius: 5px; overflow: hidden;
}
.winbtns span {
  display: flex; align-items: center; justify-content: center; width: 50px;
  background: linear-gradient(#ddd 45%, #aaa 50%, #ccc); border-right: 2px solid #333;
}
.winbtns .min { align-items: flex-end; padding-bottom: 4px; }
.winbtns .close { flex: 1; border: 0; background: linear-gradient(#e0968a 45%, #b8321e 50%, #d05a48); }

.ai-frame { flex: 1; min-height: 0; display: flex; flex-direction: column; border: 2px solid #333; }
.ctrl { height: 62px; display: flex; align-items: center; background: #d4d4d4; border-top: 2px solid #e4e4e4; }
.ctrl > * { flex: none; }
.grip-v { width: 6px; height: 42px; margin-left: 8px; background: radial-gradient(circle, #777 1px, transparent 1.500px) 0 0 / 4px 4px; }
.kind { width: 212px; padding-left: 13px; margin-bottom: 25px; }
.ctrl em { white-space: nowrap; }
.swatch, .field { display: flex; align-items: center; height: 40px; border: 2px solid #979797; background: #ededed; }
.swatch { width: 65px; }
.sw2 { margin-left: 12px; }
.swatch b { width: 38px; height: 36px; background: #000; border: 1px solid #eee; border-right: 2px solid #999; }
.swatch svg { background: #d8d8d8; }
.swatch .ring { background: linear-gradient(#ddd, #ddd) center / 14px 14px no-repeat #000; }
.lnk { color: #1414c8; line-height: 26px; height: 28px; border-bottom: 2px dotted #2222c8; white-space: nowrap; letter-spacing: -.150px; }
.l-kontur { margin-left: 22px; width: 67px; }
.num { margin-left: 6px; width: 128px; height: 37px; }
.num em { padding-left: 12px; flex: 1; letter-spacing: -.5px; }
.line1 { margin-left: 20px; width: 210px; }
.line2 { margin-left: 19px; width: 211px; }
.line1 i, .line2 i { margin-left: 9px; width: 78px; height: 4px; background: #000; }
.line2 i { margin-left: 10px; width: 90px; height: 7px; }
.line1 em, .line2 em { flex: 1; padding-left: 12px; letter-spacing: -.5px; }
.line2 em { padding-left: 13px; }
.field > svg:last-child { background: #e0e0e0; }
.lbl { margin-left: 18px; width: 59px; }
.style { width: 66px; justify-content: flex-end; }
.l-deck { margin-left: 14px; width: 84px; }
.wheel { margin-left: 28px; }
.l-aus { margin-left: 19px; width: 92px; }
.l-trans { margin-left: 37px; width: 132px; }
.isol { margin-left: 23px; }
.pmenu { margin-left: auto; margin-right: 4px; margin-bottom: 32px; }

.ai-body { flex: 1; min-height: 0; display: flex; background: #626262; border-top: 2px solid #444; }
.tools { width: 69px; border-right: 2px solid #333; }
.dockhead { height: 24px; background: linear-gradient(#606060, #3c3c3c); border-bottom: 3px solid #111; display: flex; align-items: center; padding: 0 5px; }
.dockhead.right { justify-content: flex-end; }
.toolpanel { height: 1476px; background: #d4d4d4; padding-top: 6px; overflow: hidden; }
.grip-h {
  display: block; width: 54px; height: 8px; margin: 0 auto;
  background: radial-gradient(circle, #808080 1px, transparent 1.600px) 0 0 / 4px 4px;
}
.toolpanel .grip-h { margin-bottom: 20px; }
.toolpanel .tool { width: 48px; height: 42px; margin-left: 9px; }
.toolpanel .tool.short { height: 34px; margin-top: -2px; }
.tool.active { background: #8fb4cf; box-shadow: inset 0 0 0 2px #6d98b8; }
.toolpanel hr { margin: 2px 5px 3px; border: 0; height: 3px; background: #8a8a8a; border-bottom: 1px solid #eee; }
.swap { margin-left: 9px; }
.toolpanel .close-hr { margin: 0 5px 4px; }
.modes { display: flex; gap: 2px; height: 20px; margin: 0 5px 4px; background: #999; padding: 1px; }
.modes i { flex: 1; }
.m1 { background: linear-gradient(#000, #000) center / 4px 4px no-repeat, linear-gradient(#bbb, #bbb) center / 8px 8px no-repeat #000; }
.m2 { background: linear-gradient(90deg, #eee, #333); }
.m3 { background: linear-gradient(to bottom right, #ddd 40%, #c8102e 42% 58%, #ddd 60%); }

.doc { width: 1674px; display: flex; flex-direction: column; }
.tabs { height: 40px; background: linear-gradient(#b4b4b4, #888); border-bottom: 2px solid #333; }
.tab {
  width: 431px; height: 38px; display: flex; align-items: center; justify-content: space-between;
  padding: 0 10px 0 18px; background: linear-gradient(#d4d4d4, #bdbdbd); border-right: 2px solid #555;
  font: 600 21px/36px "Open Sans", sans-serif; letter-spacing: .450px; color: #333; white-space: nowrap;
}
.viewport { flex: 1; display: flex; min-height: 0; background: #f6f6f6; }
.canvas { flex: 1; padding: 336px 2px 0 50px; overflow: hidden; }
.artboard {
  height: 1216px; padding: 385px 0 0 368px; background: #fff;
  border: 2px solid #000; border-right: 0; box-shadow: -3px 3px 0 #aaa;
}
.vscroll { width: 30px; background: #ededed; display: flex; flex-direction: column; align-items: center; padding: 11px 2px 9px 0; }
.vscroll i { width: 28px; height: 34px; margin: 901px 0 auto; background: #cdcdcd; }
.status { height: 32px; display: flex; background: #cacaca; border-top: 1px solid #999; }
.sfield { display: flex; align-items: center; justify-content: space-between; background: #f2f2f2; border: 2px solid #888; border-bottom: 0; }
.zoomf { width: 120px; padding: 4px 8px 0 10px; }
.pagef { width: 89px; padding: 2px 6px 0 10px; }
.sfield svg { margin-top: 7px; }
.sfield mark { background: #0a6fd0; color: #fff; width: 12px; }
.sinfo {
  width: 358px; margin-top: 3px; display: flex; align-items: center; padding: 0 9px 0 153px; justify-content: space-between;
  background: #b8b8b8; border: 2px solid #9a9a9a; border-top: 3px solid #d8d8d8;
}
.hscroll { flex: 1; display: flex; align-items: center; background: #ededed; padding: 0 40px 0 8px; }
.hscroll i { width: 34px; height: 29px; margin: 0 auto 0 432px; background: #cdcdcd; }

.dock { flex: 1; border-left: 2px solid #333; }
.dgroup { height: 148px; background: #d4d4d4; padding: 7px 0 6px; border-bottom: 2px solid #444; border-top: 1px solid #e2e2e2; }
.dgroup.tall { height: 208px; }
.dgroup .grip-h { margin-bottom: 13px; }
.dgroup .ico { width: 38px; height: 44px; margin: 0 0 16px 17px; overflow: visible; }
.dgroup .ico:last-child { margin-bottom: 0; }

/* Firefox window */
.ff {
  position: absolute; left: 1951px; top: 0; width: 1889px; height: 2100px; overflow: hidden;
  display: flex; flex-direction: column; background: #fff; box-shadow: 0 0 16px rgba(0, 0, 0, .5);
}
.ff-title { height: 68px; display: flex; align-items: center; padding: 2px 34px 0 80px; background: #22223c; }
.ff-tab {
  align-self: stretch; width: 448px; display: flex; align-items: center; justify-content: space-between;
  padding: 0 23px 0 18px; background: #fbfbfb; border-top: 4px solid #0a70d8;
  font: 23px/30px "Open Sans", sans-serif; letter-spacing: -.500px; color: #333;
}
.plus { margin-left: 21px; }
.ff-win { margin-left: auto; }
.ff-nav { height: 82px; display: flex; align-items: center; padding: 0 23px 2px 6px; background: #f8f8f8; border-bottom: 2px solid #ddd; }
.url {
  margin-left: 166px; width: 902px; height: 60px; display: flex; align-items: center;
  background: #fff; border: 2px solid #bbb; border-radius: 4px; box-shadow: 0 2px 4px rgba(0, 0, 0, .12);
}
.url > svg:first-child { margin-top: -8px; }
.addr {
  margin-left: 9px; width: 552px; overflow: hidden; white-space: nowrap;
  font: 27px/40px "Open Sans", sans-serif; letter-spacing: -.500px; color: #777; padding-top: 2px;
  -webkit-mask: linear-gradient(90deg, #000 490px, transparent 556px); mask: linear-gradient(90deg, #000 490px, transparent 556px);
}
.addr b { font-weight: 400; color: #000; }
.url-ic { margin-left: 70px; }
.bar-ic { margin-left: auto; }
.ff-view { flex: 1; display: grid; grid-template: 1fr 16px / 1857px 32px; }
.page { font: 32px/36px "Liberation Mono", "Courier New", monospace; font-stretch: normal; }
.crumbs { height: 83px; padding: 2px 0 0 1px; display: grid; grid-template-columns: 746px 1fr; background: #456040; color: #7c9c76; }
.crumbs .on { color: #b6dcb0; }
.controls { height: 243px; padding-top: 56px; }
h1 { margin: 0 0 41px 1px; font-size: 64px; line-height: 73px; font-weight: 400; white-space: pre; }
.btnrow { display: flex; align-items: center; padding-left: 1px; height: 40px; }
.btnrow button {
  height: 40px; margin: 0 21px 0 0; padding: 2px 0 0; display: flex; align-items: center; justify-content: center;
  background: #e1e1e1; border: 1.500px solid #adadad; color: #000;
  font: 25px/32px "Open Sans", sans-serif; letter-spacing: -.200px;
}
.btnrow .play { width: 59px; background: #e5f1fb; border-color: #1f7cc4; }
.btnrow .pause { width: 54px; }
.btnrow .step { width: 50px; }
.btnrow .rew { width: 58px; }
.btnrow .browse { margin-left: 76px; margin-right: 357px; width: 143px; height: 37px; padding: 0; }
.btnrow label { display: flex; align-items: center; gap: 7px; white-space: nowrap; }
.btnrow label i { width: 26px; height: 26px; border: 2px solid #222; background: #fff; margin-top: -4px; }
.btnrow label span { padding-top: 3px; }
.stage { height: 1536px; padding: 495px 0 0 471px; background: #666; }
.stage i { display: block; width: 177px; height: 177px; border-radius: 50%; background: #000; }
.ff-vs { grid-row: 1 / 3; grid-column: 2; display: flex; flex-direction: column; align-items: center; padding: 12px 0 26px 4px; background: #ededed; }
.ff-vs i { width: 32px; height: 1796px; margin: 10px 0 auto -4px; background: #cdcdcd; }
.ff-hs { grid-row: 2; grid-column: 1; display: flex; background: #ededed; }
.ff-hs i { width: 1585px; background: #cdcdcd; margin-right: auto; }
.ff-hs svg:last-child { margin-right: 4px; }

/* taskbar */
.taskbar {
  position: absolute; left: 0; top: 2100px; width: 3840px; height: 60px; display: flex;
  background: linear-gradient(90deg, #e8ccc8, #ebcdc8 700px, #eed6cc 1500px, #f0e2d4 2400px, #f0e4d6);
}
.sys { width: 72px; display: flex; align-items: center; justify-content: center; }
.apps { display: flex; margin-left: 5px; }
.app { width: 74px; display: flex; align-items: center; justify-content: center; }
.app.run { background: linear-gradient(#1d7a5a, #1d7a5a) center bottom / 56px 4px no-repeat; }
.app.full { background: linear-gradient(#1d7a5a, #1d7a5a) center bottom / 72px 4px no-repeat, linear-gradient(#fdf3ee, #fdf3ee) center / 72px 60px no-repeat; }
.app.multi { background: linear-gradient(90deg, #1d7a5a 40px, #5ba98c 40px) center bottom / 56px 4px no-repeat; }
.cs { width: 30px; height: 28px; font: bold 18px/28px "Liberation Sans", sans-serif; text-align: center; border-right: 2px solid rgba(0, 0, 0, .35); border-bottom: 2px solid rgba(0, 0, 0, .35); }
.cs.br { background: #c9541b; color: #3c1404; }
.cs.il { background: #f08e10; color: #fff0c0; }
.cs.ps { background: #0c6fc2; color: #bfe4ff; }
.tray { margin-left: auto; display: flex; align-items: center; font: 24px/30px "Open Sans", sans-serif; letter-spacing: -.8px; }
.wifi { margin-left: 41px; }
.vol { margin-left: 33px; }
.tray time { margin: 2px 0 0 28px; width: 93px; }
.tray i { width: 2px; height: 60px; background: #9c958c; margin: 0 7px 0 39px; }
```
